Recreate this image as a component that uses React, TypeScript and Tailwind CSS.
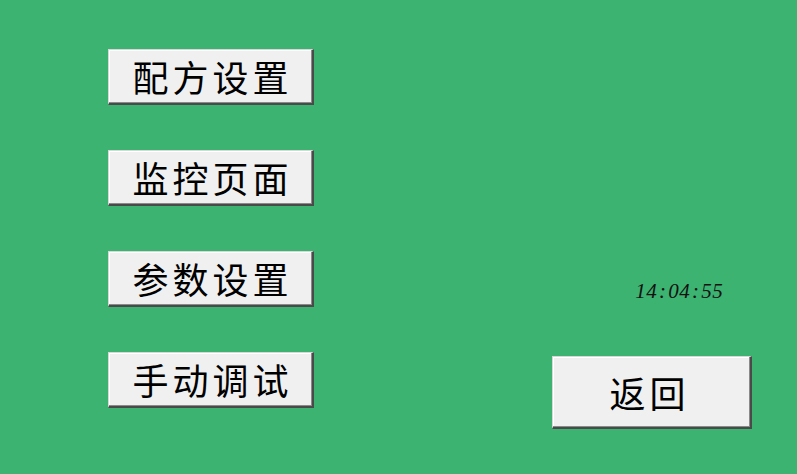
const menu = ["配方设置", "监控页面", "参数设置", "手动调试"];

const face =
  "flex items-center justify-center bg-[#f0f0f0] border-t border-l border-t-[#d8d8d8] border-l-[#d8d8d8] border-r-2 border-b-2 border-r-[#4a4a4a] border-b-[#4a4a4a] shadow-[inset_-1px_-1px_0_#8a8a8a,inset_1px_1px_0_#ffffff] text-black text-[36px] leading-none tracking-[4px]";

const cjk = { fontFamily: '"Noto Sans CJK SC", sans-serif' };

function Clock({ time }: { time: string }) {
  return (
    <div className="flex italic text-[21px] leading-none text-[#111]" style={{ fontFamily: '"Liberation Serif", serif' }}>
      {time.split("").map((c, i) => (
        <span key={i} className="inline-block w-[11px] text-center">
          {c}
        </span>
      ))}
    </div>
  );
}

export default function App() {
  return (
    <div className="w-[797px] h-[474px] bg-[#3cb371] flex overflow-hidden" style={cjk}>
      <div className="flex flex-col gap-[45px] pl-[108px] pt-[49px]">
        {menu.map((m) => (
          <button key={m} className={`${face} w-[206px] h-[56px] pl-[4px] pb-[2px]`}>
            {m}
          </button>
        ))}
      </div>
      <div className="flex flex-col ml-[238px] pt-[281px]">
        <div className="pl-[83px]">
          <Clock time="14:04:55" />
        </div>
        <button className={`${face} mt-[54px] w-[200px] h-[73px] pl-[4px] pr-[8px]`}>
          返回
        </button>
      </div>
    </div>
  );
}
